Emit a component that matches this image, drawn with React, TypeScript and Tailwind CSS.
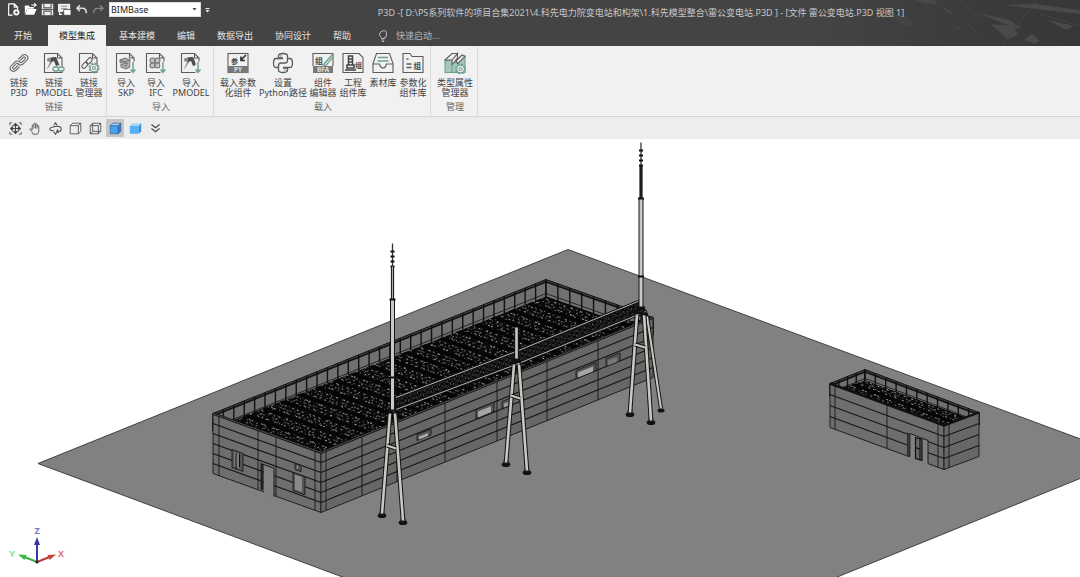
import { useState } from "react";
import type { ReactNode } from "react";

type Pt = [number, number];

const INK = "#5c5c5c";
const GREEN = "#6fa08c";

// ---------- small icon helpers ----------

function Icon({ children, className = "size-[22px]" }: { children: ReactNode; className?: string }) {
  return (
    <svg
      viewBox="0 0 22 22"
      className={`shrink-0 ${className}`}
      fill="none"
      stroke={INK}
      strokeWidth="1.1"
      aria-hidden="true"
    >
      {children}
    </svg>
  );
}

// Page outline with a folded corner, shared by the link and import icons
const Sheet = () => <path d="M1.500 1.500h13l4.500 4.500v14.500H1.500zM14.500 1.500V6h4.500" />;

const DownArrow = () => (
  <g>
    <path d="M18 9.500v12" stroke="#f1f1f1" strokeWidth="5" />
    <g stroke={GREEN} strokeWidth="1.500">
      <path d="M18 10v10M15.500 17.500L18 20.300l2.500-2.800" />
    </g>
  </g>
);

const LinkIcon = () => (
  <Icon>
    <g transform="rotate(-45 11 11)" strokeWidth="1">
      <path d="M9 14H3.500a3.300 3.300 0 010-6.600H9a3.300 3.300 0 013 4.600" />
      <path d="M8.500 12H4a1.300 1.300 0 010-2.600h4.500a1.300 1.300 0 011 1.600" />
      <path d="M13 8h5.500a3.300 3.300 0 010 6.600H13a3.300 3.300 0 01-3-4.600" />
      <path d="M13.500 10H18a1.300 1.300 0 010 2.600h-4.500a1.300 1.300 0 01-1-1.600" />
    </g>
  </Icon>
);

const ModelGlyph = () => (
  <g stroke="none">
    <path d="M4.500 6l8-1-4 6-4 6H4l3-7-3-1z" fill="#8a8a8a" />
    <path d="M8 5.500l5-.5 3.500 8-3.500 1-2-5-3 1z" fill="#4d4d4d" />
  </g>
);

const LinkModelIcon = () => (
  <Icon>
    <Sheet />
    <ModelGlyph />
    <g stroke={GREEN} strokeWidth="1.300">
      <rect x="10" y="15" width="5.500" height="4" rx="2" fill="#f0f0f0" />
      <rect x="15.500" y="15" width="5.500" height="4" rx="2" fill="#f0f0f0" />
    </g>
  </Icon>
);

const Gear = ({ x, y }: { x: number; y: number }) => (
  <g transform={`translate(${x} ${y})`} stroke={GREEN}>
    <circle r="4.800" strokeWidth="1.500" strokeDasharray="2.200 1.570" />
    <circle r="3.800" fill="#f0f0f0" />
    <circle r="1.500" />
  </g>
);

const LinkManagerIcon = () => (
  <Icon>
    <Sheet />
    <g transform="rotate(-45 9 11)">
      <rect x="2.500" y="9" width="7" height="4" rx="2" />
      <rect x="8.500" y="9" width="7" height="4" rx="2" />
    </g>
    <Gear x={16} y={16} />
  </Icon>
);

const SkpIcon = () => (
  <Icon>
    <Sheet />
    <g stroke="#777">
      <path d="M5 8l5-2 5 2v7l-4 2-5-2v-3l5 2v-2L5 10z" fill="#b0b0b0" />
      <path d="M5 8l5 2 5-2M10 10l3 2" />
    </g>
    <DownArrow />
  </Icon>
);

const IfcIcon = () => (
  <Icon>
    <Sheet />
    <g stroke="#777" fill="#c4c4c4">
      <circle cx="7.500" cy="8.500" r="2.500" />
      <circle cx="12.500" cy="8.500" r="2.500" />
      <circle cx="7.500" cy="13.500" r="2.500" />
      <circle cx="12.500" cy="13.500" r="2.500" />
    </g>
    <DownArrow />
  </Icon>
);

const ImportModelIcon = () => (
  <Icon>
    <Sheet />
    <ModelGlyph />
    <DownArrow />
  </Icon>
);

const glyphFont = "Noto Sans, Noto Sans CJK SC, sans-serif";

function Glyph({ x, y, size, fill = "#444", children }: { x: number; y: number; size: number; fill?: string; children: string }) {
  return (
    <text x={x} y={y} fontSize={size} fill={fill} stroke="none" fontWeight="700" fontFamily={glyphFont}>
      {children}
    </text>
  );
}

const LoadParamIcon = () => (
  <Icon>
    <rect x="1" y="1.500" width="20" height="19" />
    <rect x="1" y="14" width="20" height="7" fill="#777" stroke="none" />
    <Glyph x={4} y={11.500} size={7}>参</Glyph>
    <path d="M19 3l-5 5M14 4.500V8.500h4" strokeWidth="1.700" stroke="#333" />
    <Glyph x={7} y={20} size={6.500} fill="#ddd">PY</Glyph>
  </Icon>
);

const PythonIcon = () => (
  <Icon>
    <path
      strokeWidth="1.300"
      d="M11 6H6.500V4Q6.500 1.500 11 1.500T15.500 4v4.500Q15.500 11 13 11H9Q6.500 11 6.500 14v1.500H4Q1.500 15.500 1.500 11T4 6.500h7M11 16h4.500v2q0 2.500-4.500 2.500T6.500 18v-4.500M15.500 6.500H18q2.500 0 2.500 4.500T18 15.500h-7"
    />
    <path d="M9 3.500v1M13 17.500v1" strokeWidth="1.400" />
  </Icon>
);

const EditorIcon = () => (
  <Icon>
    <path d="M1 14V1.500h20V14" />
    <rect x="1" y="14" width="20" height="7" fill="#777" stroke="none" />
    <Glyph x={3} y={11.500} size={8}>组</Glyph>
    <path d="M20.500 2.500l-8 8.500-1 3 3-1 7-8.500z" fill="#b7d6ca" stroke={GREEN} />
    <Glyph x={5} y={20} size={6.500} fill="#ddd">BFA</Glyph>
  </Icon>
);

const ProjectLibIcon = () => (
  <Icon>
    <path d="M1 1.500h16l4 4v15H1z" />
    <path d="M6.500 4h4v9h-4zM5 13h7v3H5zM6.500 7h4M6.500 10h4M3 18h11" strokeWidth="1.500" stroke="#444" />
    <Glyph x={13} y={16} size={7}>组</Glyph>
  </Icon>
);

const MaterialIcon = () => (
  <Icon>
    <path d="M4.500 1.500h13l3.500 10v9H1v-9zM1 12h6.500q1 4 3.500 4t3.500-4H21" />
    <path d="M6 5.500h10M5.500 9h11" stroke={GREEN} strokeWidth="1.300" />
  </Icon>
);

const ParamLibIcon = () => (
  <Icon>
    <path d="M1 20.500v-19h7l2 3h11v16z" />
    <path d="M4.500 7h2M4.500 12h5M4.500 15.500h5" strokeWidth="1.400" />
    <Glyph x={11.500} y={17} size={7.500}>组</Glyph>
  </Icon>
);

const TypeManagerIcon = () => (
  <Icon>
    <path d="M1 8h7l5 3.500L21 4v16.500H1z" fill="#a5c7ba" stroke={GREEN} />
    <path d="M1 8l7-6.500h5.500L8 8zM8 8l5.500-6.500V6L8 13zM12 9l6-6 3 1.500-7 7z" fill="#eee" />
    <path d="M8 8v12.500" stroke={GREEN} />
    <Gear x={16.500} y={17} />
  </Icon>
);

// ---------- ribbon ----------

interface Tool {
  label: string;
  width: string;
  Icon: () => ReactNode;
}

const GROUPS: { name: string; tools: Tool[] }[] = [
  {
    name: "链接",
    tools: [
      { label: "链接\nP3D", width: "w-[30px]", Icon: LinkIcon },
      { label: "链接\nPMODEL", width: "w-10", Icon: LinkModelIcon },
      { label: "链接\n管理器", width: "w-[30px]", Icon: LinkManagerIcon },
    ],
  },
  {
    name: "导入",
    tools: [
      { label: "导入\nSKP", width: "w-[30px]", Icon: SkpIcon },
      { label: "导入\nIFC", width: "w-[30px]", Icon: IfcIcon },
      { label: "导入\nPMODEL", width: "w-10", Icon: ImportModelIcon },
    ],
  },
  {
    name: "载入",
    tools: [
      { label: "载入参数\n化组件", width: "w-10", Icon: LoadParamIcon },
      { label: "设置\nPython路径", width: "w-[50px]", Icon: PythonIcon },
      { label: "组件\n编辑器", width: "w-[30px]", Icon: EditorIcon },
      { label: "工程\n组件库", width: "w-[30px]", Icon: ProjectLibIcon },
      { label: "素材库", width: "w-[30px]", Icon: MaterialIcon },
      { label: "参数化\n组件库", width: "w-[30px]", Icon: ParamLibIcon },
    ],
  },
  {
    name: "管理",
    tools: [{ label: "类型属性\n管理器", width: "w-10", Icon: TypeManagerIcon }],
  },
];

function Ribbon() {
  return (
    <div className="flex border-b border-[#d4d4d4] bg-[#f1f1f1]">
      {GROUPS.map((group) => (
        <section
          key={group.name}
          className="flex flex-col items-center border-r border-[#dcdcdc] pt-1.5 pr-0.5 pb-[3px] pl-1"
        >
          <div className="flex h-12 items-start">
            {group.tools.map(({ label, width, Icon: ToolIcon }) => (
              <button
                key={label}
                type="button"
                className={`flex flex-col items-center gap-1 hover:bg-[#e2e2e2] ${width}`}
              >
                <ToolIcon />
                <span className="text-center leading-[10px] whitespace-pre">{label}</span>
              </button>
            ))}
          </div>
          <h2 className="pt-px leading-3 text-[#666]">{group.name}</h2>
        </section>
      ))}
    </div>
  );
}

// ---------- title bar ----------

const QUICK = [
  {
    label: "新建",
    art: (
      <>
        <path d="M2 1h7l4 4v3M7 15H2V1M9 1v4h4" fill="none" stroke="#fff" strokeWidth="1.400" />
        <circle cx="11.500" cy="11.500" r="3.800" fill="#fff" />
        <path d="M11.500 9.500v4M9.500 11.500h4" stroke="#444" />
      </>
    ),
  },
  {
    label: "打开",
    art: (
      <>
        <path d="M1 14V3h5l1 2h5v2H4z" fill="#fff" />
        <path d="M4 7.500h11.500l-3 7h-11z" fill="#fff" />
        <path d="M9 2.500h5M12.500.500l2.500 2-2.500 2" fill="none" stroke="#fff" strokeWidth="1.400" />
      </>
    ),
  },
  {
    label: "保存",
    art: (
      <>
        <rect x="1" y="1" width="14" height="14" fill="#eee" />
        <path d="M3.500 1v5h9V1M3.500 15v-5h9v5M1 8h14" stroke="#555" fill="none" strokeWidth="1.300" />
      </>
    ),
  },
  {
    label: "另存为",
    art: (
      <>
        <rect x="0" y="1" width="15" height="10" fill="#eee" />
        <path d="M3.500 4h8M3.500 7h8" stroke="#777" />
        <path d="M7 8h9v7H7z" fill="#fff" stroke="#444" />
        <path d="M2 11v3h3" stroke="#fff" fill="none" strokeWidth="1.500" />
      </>
    ),
  },
  {
    label: "撤销",
    art: <path d="M6 3L2.500 6.500 6 10M2.500 6.500H9q5 0 5 6" fill="none" stroke="#ddd" strokeWidth="2" />,
  },
  {
    label: "重做",
    art: <path d="M10 3l3.500 3.500L10 10M13.500 6.500H7q-5 0-5 6" fill="none" stroke="#888" strokeWidth="1.600" />,
  },
];

// Faint glass shards in the header's right corner
function HeaderArt() {
  return (
    <svg
      viewBox="0 0 270 46"
      className="pointer-events-none absolute inset-y-0 right-0 h-full w-1/4"
      preserveAspectRatio="xMaxYMid slice"
      aria-hidden="true"
    >
      <linearGradient id="shade">
        <stop offset="0" stopColor="#444" />
        <stop offset=".6" stopColor="#3b3b3b" />
        <stop offset="1" stopColor="#373737" />
      </linearGradient>
      <path d="M0 0h270v46H0z" fill="url(#shade)" />
      <g fill="#4a4a4a">
        <path d="M168 13l32 7 12 9-10-2z" />
        <path d="M180 24l24 2 4 9-10 4z" />
        <path d="M82 16l14 0 10 9-12 1z" opacity=".6" />
        <path d="M194 5l40 5 36 4v-4l-44-6z" />
        <path d="M214 40l8-6 8 7-6 3z" />
        <path d="M104 0h20l4 4-12-1zM140 24l8 3 7 5zM130 6l10 5 3 5zM238 20l26 6-8 4z" />
      </g>
      <g stroke="#454545" fill="none">
        <path d="M150 0l22 20M156 22l14 14M226 0l-34 46M270 26l-40-12" />
      </g>
    </svg>
  );
}

const TABS = ["开始", "模型集成", "基本建模", "编辑", "数据导出", "协同设计", "帮助"];

function Header() {
  const [tab, setTab] = useState("模型集成");
  return (
    <header className="relative bg-[#444] text-[#e4e4e4]">
      <HeaderArt />
      <div className="relative flex h-[25px] items-center pr-2 pl-[7px]">
        <div className="flex items-center gap-1 pb-1.5">
          {QUICK.map((q) => (
            <button key={q.label} type="button" aria-label={q.label}>
              <svg viewBox="0 0 16 16" className="size-[13px]" aria-hidden="true">
                {q.art}
              </svg>
            </button>
          ))}
          <div className="relative">
            <select
              aria-label="软件平台"
              className="block h-[15px] w-[92px] appearance-none border border-[#ddd] bg-white px-px text-[9px] leading-3 text-[#222]"
              defaultValue="BIMBase"
            >
              <option>BIMBase</option>
            </select>
            <svg viewBox="0 0 5 3" className="pointer-events-none absolute top-1.5 right-1 h-[3px] w-[5px]" aria-hidden="true">
              <path d="M.5 0h4l-2 2.500z" fill="#444" />
            </svg>
          </div>
          <button type="button" aria-label="自定义快速访问工具栏">
            <svg viewBox="0 0 5 6" className="h-1.5 w-[5px]" aria-hidden="true">
              <path d="M.5 1h4v1h-4zM.5 3h4l-2 2.500z" fill="#eee" />
            </svg>
          </button>
        </div>
        <h1 className="flex-1 truncate text-center text-[#c8c8c8]">
          P3D -[ D:\PS系列软件的项目合集2021\4.科先电力院变电站和构架\1.科先模型整合\雷公变电站.P3D ] - [文件 雷公变电站.P3D 视图 1]
        </h1>
      </div>
      <nav className="relative flex h-[21px] items-stretch pl-[3px]">
        {TABS.map((t) => (
          <button
            key={t}
            type="button"
            onClick={() => setTab(t)}
            aria-current={t === tab ? "page" : undefined}
            className={`px-[11px] ${t === tab ? "mr-0.5 bg-[#f1f1f1] text-[#222] not-first:ml-[5px]" : ""}`}
          >
            {t}
          </button>
        ))}
        <label className="ml-4 flex items-center gap-2 text-[#b8b8b8]">
          <svg viewBox="0 0 10 12" className="h-3 w-2.5" fill="none" stroke="#bbb" aria-hidden="true">
            <path d="M3.500 8.500V7.500Q1.500 6 1.500 4T5 .8 8.500 4 6.500 7.500v1zM3.500 10h3M4 11.500h2" />
          </svg>
          <input
            type="text"
            aria-label="快速启动"
            placeholder="快速启动..."
            className="w-24 bg-transparent text-[9px] outline-none placeholder:text-[#b8b8b8]"
          />
        </label>
      </nav>
    </header>
  );
}

// ---------- view toolbar ----------

const VIEW_TOOLS = [
  {
    label: "全图",
    art: (
      <>
        <path d="M1 4V1h3M12 1h3v3M15 12v3h-3M4 15H1v-3" />
        <path d="M8 2v12M2 8h12M6 4l2-2 2 2M6 12l2 2 2-2M4 6L2 8l2 2M12 6l2 2-2 2" strokeWidth="1.400" />
        <rect x="4.500" y="4.500" width="7" height="7" />
      </>
    ),
  },
  {
    label: "平移",
    art: (
      <path d="M5 15q-1-3-4-6 1-1.500 3 .5V4q1.500-1.500 2 0V2q1.200-1.500 2 0v1q1.200-1.500 2 0v1.500q1.200-1.200 2 .5V11q0 2-1.500 4zM6 4v4M8 3v5M10 4v4" />
    ),
  },
  {
    label: "旋转",
    art: (
      <path d="M6 11Q1 10.500 1 8.500T8 5.500t7 3-4 2.500M6 4l2-3 2 3M11 9l-1.500 2.500L12 13M6 12l2 3 2-3" strokeWidth="1.300" />
    ),
  },
  { label: "隐藏线", art: <path d="M1.500 4.500h10v10h-10zM1.500 4.500l3-3h10l-3 3M14.500 1.500v10l-3 3" /> },
  {
    label: "线框",
    art: <path d="M1.500 4.500h10v10h-10zM1.500 4.500l3-3h10l-3 3M14.500 1.500v10l-3 3M4.500 1.500v10h10M4.500 11.500l-3 3" />,
  },
  {
    label: "着色带边",
    art: (
      <g stroke="#2b5d92" strokeWidth=".8">
        <path d="M1.500 4.500h10v10h-10z" fill="#4aa3ee" />
        <path d="M1.500 4.500l3-3h10l-3 3z" fill="#9fd0fa" />
        <path d="M14.500 1.500v10l-3 3v-10z" fill="#2f7fc9" />
      </g>
    ),
  },
  {
    label: "着色",
    art: (
      <g stroke="none">
        <path d="M1 4.500h11v10H1z" fill="#55b1f5" />
        <path d="M1 4.500l3-3h11l-3 3z" fill="#a4d7fb" />
        <path d="M15 1.500v10l-3 3v-10z" fill="#3a8fd8" />
      </g>
    ),
  },
  { label: "更多", art: <path d="M3 3l5 4 5-4M3 8l5 4 5-4" strokeWidth="1.400" /> },
];

function ViewToolbar() {
  const [mode, setMode] = useState("着色带边");
  return (
    <div className="flex h-[22px] items-center gap-0.5 bg-[#ededed] pl-1.5">
      {VIEW_TOOLS.map((tool) => (
        <button
          key={tool.label}
          type="button"
          aria-label={tool.label}
          onClick={() => setMode(tool.label)}
          className={`flex size-[18px] items-center justify-center ${tool.label === mode ? "bg-[#c6c6c6]" : ""}`}
        >
          <svg viewBox="0 0 16 16" className="size-[13px]" fill="none" stroke="#444" aria-hidden="true">
            {tool.art}
          </svg>
        </button>
      ))}
    </div>
  );
}

// ---------- 3D model ----------

const seg = (a: Pt, b: Pt) => `M${a[0]} ${a[1]}L${b[0]} ${b[1]}`;
const at = (a: Pt, b: Pt, t: number): Pt => [a[0] + (b[0] - a[0]) * t, a[1] + (b[1] - a[1]) * t];

// A wall between two top corners, split into equal courses and vertical joints
function Wall({ a, b, h, rows, joints, fill }: { a: Pt; b: Pt; h: number; rows: number; joints: number[]; fill: string }) {
  const courses = Array.from({ length: rows - 1 }, (_, i) => {
    const dy = ((i + 1) * h) / rows;
    return seg([a[0], a[1] + dy], [b[0], b[1] + dy]);
  }).join("");
  const verticals = joints
    .map((x) => {
      const [, y] = at(a, b, (x - a[0]) / (b[0] - a[0]));
      return `M${x} ${y}v${h}`;
    })
    .join("");
  return (
    <g stroke="#161616">
      <path d={`${seg(a, b)}v${h}L${a[0]} ${a[1] + h}z`} fill={fill} strokeWidth=".9" />
      <path d={courses} strokeWidth="1.200" />
      <path d={verticals} strokeWidth=".9" />
    </g>
  );
}

// Inner parapet face: rim line, posts and a foot line
function Parapet({ a, b, h, posts }: { a: Pt; b: Pt; h: number; posts: number }) {
  const lines = Array.from({ length: posts + 1 }, (_, i) => {
    const [x, y] = at(a, b, i / posts);
    return `M${x} ${y}v${h}`;
  }).join("");
  return (
    <g stroke="#111">
      <path d={`${seg(a, b)}v${h}L${a[0]} ${a[1] + h}z`} fill="#707070" strokeWidth=".8" />
      <path d={seg([a[0], a[1] + 1.5], [b[0], b[1] + 1.5])} strokeWidth="3.400" />
      <path d={seg([a[0], a[1] + 1], [b[0], b[1] + 1])} stroke="#5c5c5c" strokeWidth=".7" />
      <path d={lines} strokeWidth="1.400" />
      <path d={seg([a[0], a[1] + h - 4], [b[0], b[1] + h - 4])} strokeWidth=".8" />
    </g>
  );
}

// Dense joist grid: broken light strokes running along both roof directions
function Roof({ id, outline, o, u, v, n, m }: { id: string; outline: string; o: Pt; u: Pt; v: Pt; n: number; m: number }) {
  const along = Array.from({ length: n }, (_, i) => {
    const t = (i + 0.5) / n;
    const p: Pt = [o[0] + v[0] * t, o[1] + v[1] * t];
    return { d: seg(p, [p[0] + u[0], p[1] + u[1]]), offset: (i * 11) % 17 };
  });
  const across = Array.from({ length: m }, (_, i) => {
    const p = at(o, [o[0] + u[0], o[1] + u[1]], i / m);
    return seg(p, [p[0] + v[0], p[1] + v[1]]);
  });
  return (
    <g>
      <clipPath id={id}>
        <path d={outline} />
      </clipPath>
      <path d={outline} fill="#0a0a0a" />
      <g clipPath={`url(#${id})`} fill="none">
        {along.map((l, i) => (
          <path
            key={i}
            d={l.d}
            stroke="#8a8a8a"
            strokeWidth=".8"
            strokeDasharray="1 3 2 5 1 2 2 7"
            strokeDashoffset={l.offset}
          />
        ))}
        {across.map((d, i) => (
          <path
            key={i}
            d={d}
            stroke={i % 2 ? "#a8a8a8" : "#727272"}
            strokeWidth=".9"
            strokeDasharray={i % 3 ? "2 3 1 4 2 6" : "2 1 2 8"}
            strokeDashoffset={(i * 5) % 13}
          />
        ))}
        <path d={across.filter((_, i) => i % 4 === 0).join("")} stroke="#050505" strokeWidth="3" />
      </g>
    </g>
  );
}

function Window({ x, y, w, h, skew, lite = "#999" }: { x: number; y: number; w: number; h: number; skew: number; lite?: string }) {
  return (
    <g stroke="#1a1a1a" strokeWidth=".9">
      <path d={`M${x} ${y}l${w} ${w * skew}v${h}l${-w} ${-w * skew}z`} fill="#555" />
      <path d={`M${x + 2} ${y + 2}l${w - 5} ${(w - 5) * skew}v${h - 3}l${5 - w} ${(5 - w) * skew}z`} fill={lite} stroke="none" />
    </g>
  );
}

function Pole({ from, to, w = 3, fill = "#c9c9c2" }: { from: Pt; to: Pt; w?: number; fill?: string }) {
  return (
    <>
      <path d={seg(from, to)} stroke="#151515" strokeWidth={w + 2} />
      <path d={seg(from, to)} stroke={fill} strokeWidth={w} />
    </>
  );
}

function Foot({ at: [x, y] }: { at: Pt }) {
  return (
    <>
      <ellipse cx={x} cy={y} rx="4.300" ry="2.600" fill="#111" />
      <path d={`M${x - 2.5} ${y - 1}v-3h5v3z`} fill="#222" />
    </>
  );
}

function Legs({ pairs, brace }: { pairs: [Pt, Pt][]; brace: [Pt, Pt] }) {
  return (
    <g>
      {pairs.map(([a, b]) => (
        <g key={b.join()}>
          <Foot at={b} />
          <Pole from={a} to={[b[0], b[1] - 2]} w={2.6} />
        </g>
      ))}
      <Pole from={brace[0]} to={brace[1]} w={2} />
    </g>
  );
}

function Mast({ x, top, rod, joint, mid, foot, rodFill }: { x: number; top: number; rod: number; joint: number; mid: number; foot: number; rodFill: string }) {
  const beads = [8, 13, 18, 23].map((d) => `M${x - 2} ${top + d}h4`).join("");
  return (
    <g>
      <path d={`M${x} ${top}V${rod}`} stroke="#333" strokeWidth="1.300" />
      <path d={beads} stroke="#111" strokeWidth="2" />
      <Pole from={[x, rod]} to={[x, joint]} w={1.2} fill={rodFill} />
      <Pole from={[x, joint]} to={[x, foot]} w={3} />
      <path d={`M${x - 3} ${joint}h6M${x - 3} ${mid}h6M${x - 4} ${foot}h8`} stroke="#111" strokeWidth="2" />
    </g>
  );
}

function Truss({ top, bottom }: { top: [Pt, Pt]; bottom: [Pt, Pt] }) {
  const n = 16;
  const web = Array.from({ length: n }, (_, i) => {
    const a = at(top[0], top[1], i / n);
    const b = at(bottom[0], bottom[1], (i + 0.5) / n);
    const c = at(top[0], top[1], (i + 1) / n);
    return seg(a, b) + `L${c[0]} ${c[1]}`;
  }).join("");
  return (
    <g fill="none">
      <path d={`${seg(top[0], top[1])}L${bottom[1].join(" ")}L${bottom[0].join(" ")}z`} fill="#1c1c1c" stroke="#111" strokeWidth="2" />
      <path d={web} stroke="#000" strokeWidth="2" />
      <path d={web} stroke="#8a8a8a" strokeWidth=".6" strokeDasharray="3 2" />
      <path d={seg(top[0], top[1]) + seg(bottom[0], bottom[1])} stroke="#111" strokeWidth="2.800" />
      <path d={seg(top[0], top[1]) + seg(bottom[0], bottom[1])} stroke="#b5b5b0" strokeWidth="1" />
    </g>
  );
}

function Model() {
  return (
    <svg
      viewBox="0 138 1080 439"
      preserveAspectRatio="xMidYMid slice"
      className="block size-full"
      role="img"
      aria-label="雷公变电站三维模型"
    >
      <path d="M38 463L568 249L1090 442V474L836 577L800 592H384z" fill="#818181" stroke="#333" strokeWidth=".9" />

      {/* main building */}
      <Parapet a={[213, 413]} b={[546, 279]} h={18} posts={32} />
      <Parapet a={[546, 279]} b={[653, 317]} h={18} posts={9} />
      <Roof
        id="roof-main"
        outline="M230 421L546 296L620 322L652 318L321 452z"
        o={[213, 416]}
        u={[333, -134]}
        v={[108, 39]}
        n={22}
        m={76}
      />
      <Wall a={[213, 413]} b={[321, 452]} h={60} rows={6} joints={[219, 258, 276, 315]} fill="#6e6e6e" />
      <Wall a={[321, 452]} b={[653, 317]} h={60} rows={6} joints={[326, 362, 397, 445, 497, 547, 598, 648]} fill="#676767" />
      <path d="M213 413L321 452L653 317" fill="none" stroke="#111" strokeWidth="2.600" />
      <path d="M213 413L321 452L653 317" fill="none" stroke="#6a6a6a" strokeWidth=".7" />
      <path d="M264 464l10 3.600v29.400l-10-3.600z" fill="#818181" />
      <path d="M260.500 463l3 1v26l-3-1z" fill="#222" />
      <path d="M260.500 463l13.500 4.800V496" fill="none" stroke="#1a1a1a" />
      <Window x={232} y={449} w={11} h={18} skew={0.36} lite="#7c7c7c" />
      <path d="M236 452v17M239.500 453v14" stroke="#111" />
      <Window x={293} y={472} w={12} h={18} skew={0.36} lite="#8a8a8a" />
      <Window x={295} y={463} w={6} h={6} skew={0.36} />
      <Window x={417} y={434} w={14} h={6} skew={-0.4} lite="#aaa" />
      <Window x={476} y={409} w={18} h={9} skew={-0.4} lite="#a6a6a6" />
      <Window x={502} y={401} w={9} h={7} skew={-0.4} />
      <Window x={576} y={370} w={20} h={8} skew={-0.4} lite="#a6a6a6" />
      <Window x={606} y={358} w={14} h={8} skew={-0.4} lite="#777" />

      {/* gantry */}
      <Truss top={[[396, 397], [516, 351]]} bottom={[[396, 409], [516, 364]]} />
      <Truss top={[[516, 351], [638, 301]]} bottom={[[516, 364], [646, 311]]} />
      <Pole from={[647, 316]} to={[661, 408]} w={2} />
      <ellipse cx="661" cy="410" rx="3.500" ry="2" fill="#111" />
      <Legs
        pairs={[[[390, 413], [382, 515]], [[395, 413], [403, 522]]]}
        brace={[[387, 445], [396, 448]]}
      />
      <Legs
        pairs={[[[514, 364], [506, 464]], [[519, 364], [527, 472]]]}
        brace={[[511, 395], [520, 398]]}
      />
      <Legs
        pairs={[[[637, 314], [630, 414]], [[644, 314], [651, 422]]]}
        brace={[[635, 344], [645, 347]]}
      />
      <Pole from={[516.5, 327]} to={[516.5, 358]} w={2.6} />
      <path d="M512 361h9M632 311l16 3" stroke="#111" strokeWidth="3" />
      <Mast x={392.5} top={243} rod={266} joint={299} mid={377} foot={410} rodFill="#aaa" />
      <Mast x={641} top={142} rod={165} joint={198} mid={276} foot={307} rodFill="#222" />

      {/* annex */}
      <Parapet a={[830, 383]} b={[865, 369]} h={13} posts={4} />
      <Parapet a={[865, 369]} b={[979, 412]} h={13} posts={11} />
      <Roof
        id="roof-annex"
        outline="M843 387L865 380L966 417L944 425z"
        o={[830, 385]}
        u={[35, -14]}
        v={[114, 43]}
        n={18}
        m={11}
      />
      <Wall a={[830, 383]} b={[944, 425]} h={44} rows={4} joints={[835, 887, 938]} fill="#6e6e6e" />
      <Wall a={[944, 425]} b={[979, 412]} h={44} rows={4} joints={[949]} fill="#676767" />
      <path d="M830 383L944 425L979 412" fill="none" stroke="#111" strokeWidth="2.400" />
      <path d="M910 433l18 7v24.500l-18-6.500z" fill="#818181" />
      <path d="M907 432l3.500 1v23l-3.500-1z" fill="#333" />
      <path d="M910 433l18 7v23" fill="none" stroke="#1a1a1a" />
      <path d="M915.500 437l6.500 2v21l-6.500-2zM920 439v21M915.500 447l4 1.500" fill="#666" stroke="#111" strokeWidth="1.200" />
    </svg>
  );
}

function AxisTriad() {
  return (
    <svg viewBox="0 0 60 46" className="absolute bottom-2 left-2 h-[46px] w-[60px]" aria-label="坐标轴" role="img">
      <g strokeWidth="2" fill="none">
        <path d="M29 39L14 33" stroke="#3fae49" />
        <path d="M29 39l15-6" stroke="#c03838" />
        <path d="M29 39V20" stroke="#3a3a9c" />
      </g>
      <path d="M10 31.500l8.500.5-2 5z" fill="#33bb3d" />
      <path d="M48 31.500l-8.500.5 2 5z" fill="#cf3c3c" />
      <path d="M29 14l3 8h-6z" fill="#3636a5" />
      <circle cx="29" cy="39" r="1.600" fill="#223" />
      <g fontFamily="Noto Sans, sans-serif" fontSize="9" fontWeight="700" textAnchor="middle">
        <text x="29" y="11" fill="#7777cf">Z</text>
        <text x="4" y="34" fill="#86df86">Y</text>
        <text x="53" y="34" fill="#e07878">X</text>
      </g>
    </svg>
  );
}

export default function App() {
  return (
    <div className="flex h-screen flex-col bg-white font-['Noto_Sans','Noto_Sans_CJK_SC',sans-serif] text-[9px] text-[#444]">
      <Header />
      <Ribbon />
      <ViewToolbar />
      <main className="relative min-h-0 flex-1 overflow-hidden">
        <Model />
        <AxisTriad />
      </main>
    </div>
  );
}
